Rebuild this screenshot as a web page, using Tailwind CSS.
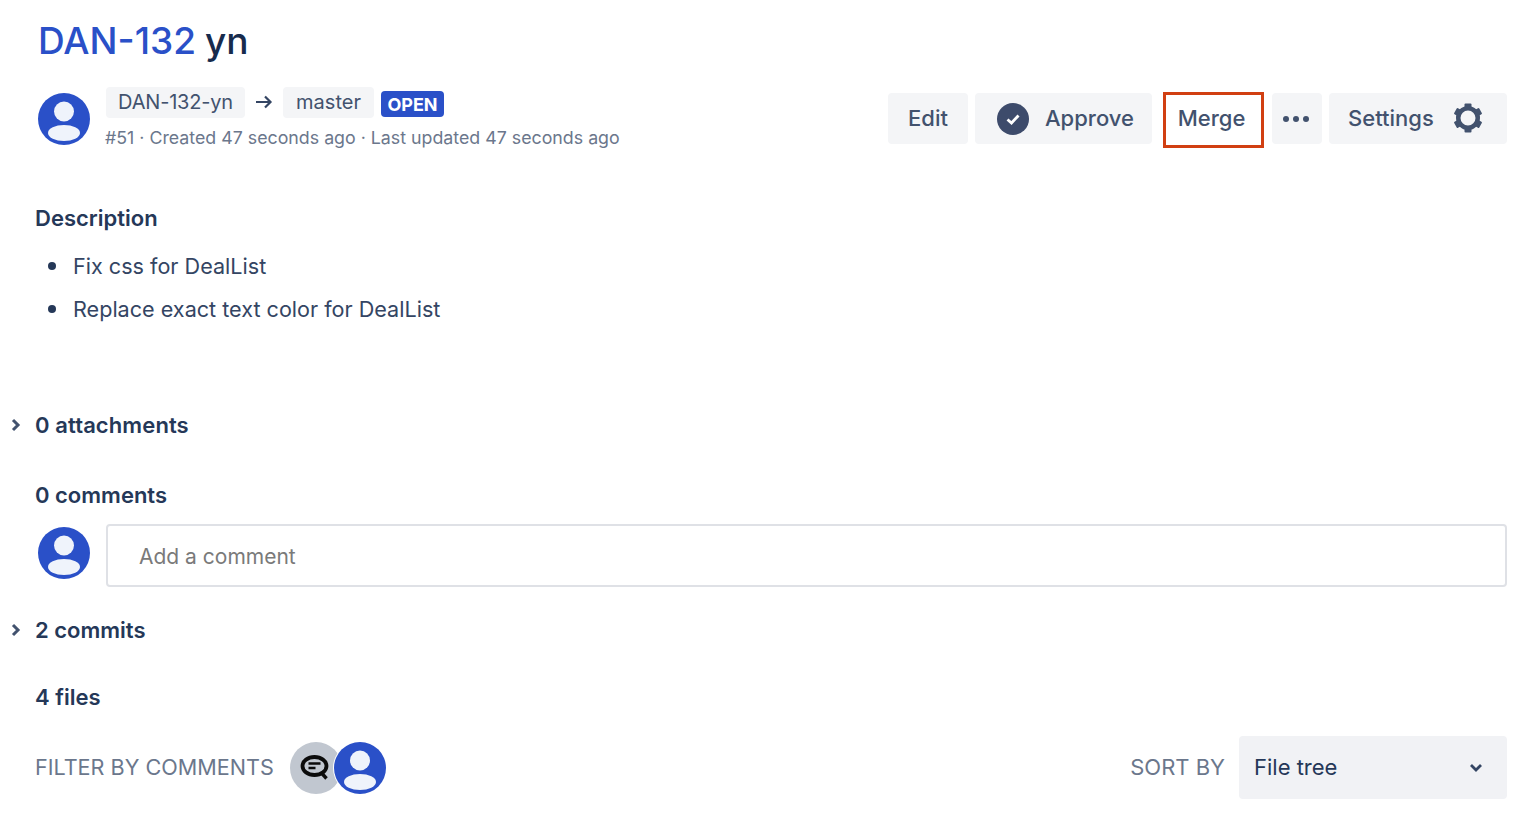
<!DOCTYPE html>
<html lang="en">
<head>
    <meta charset="UTF-8">
    <title>DAN-132 yn</title>
    <script src="https://cdn.jsdelivr.net/npm/@tailwindcss/browser@4"></script>
</head>
<body class="bg-white font-['Inter',sans-serif] text-[#253858] overflow-hidden">
    <div class="w-[1532px] h-[823px] pr-[25px] flex flex-col">
        <!-- Title -->
        <h1 class="h-[82px] pl-[38px] flex items-center text-[37px] font-medium">
            <a class="text-[#2a50c8]">DAN-132</a><span class="ml-[9px] text-[#172b4d]">yn</span>
        </h1>

        <!-- PR header -->
        <div class="h-[70px] flex items-start">
            <svg class="w-[52px] h-[52px] ml-[38px] mt-[11px] shrink-0" viewBox="0 0 52 52"><circle cx="26" cy="26" r="26" fill="#2a50c8"/><circle cx="26" cy="18.500" r="10" fill="#eff3fb"/><ellipse cx="26" cy="40" rx="16" ry="8" fill="#eff3fb"/></svg>
            <div class="ml-[16px] mt-[5px]">
                <div class="flex items-center h-[31px] text-[20px]">
                    <span class="h-[31px] w-[139px] pb-[2px] flex items-center justify-center rounded-[4px] bg-[#f4f5f7] text-[#42526e] tracking-[-0.2px]">DAN-132-yn</span>
                    <svg class="w-[20px] h-[20px] mx-[9px] -mt-[2px]" viewBox="0 0 20 20" fill="none" stroke="#344563" stroke-width="2.200"><path d="M2 10h15M11 4.500l5.500 5.500-5.500 5.500"/></svg>
                    <span class="h-[31px] w-[91px] pb-[2px] flex items-center justify-center rounded-[4px] bg-[#f4f5f7] text-[#42526e]">master</span>
                    <span class="ml-[7px] mt-[3px] h-[26px] w-[63px] flex items-center justify-center rounded-[4px] bg-[#2a50c8] text-white text-[18px] font-bold">OPEN</span>
                </div>
                <p class="mt-[9px] -ml-[1px] text-[17.800px] leading-[22px] text-[#6b778c]">#51 · Created 47 seconds ago · Last updated 47 seconds ago</p>
            </div>
            <div class="ml-auto mt-[11px] flex items-start text-[22px] font-medium text-[#42526e]">
                <button class="h-[51px] w-[80px] rounded-[4px] bg-[#f4f5f7]">Edit</button>
                <button class="ml-[7px] h-[51px] w-[177px] rounded-[4px] bg-[#f4f5f7] flex items-center pl-[22px]">
                    <svg class="w-[32px] h-[32px] mr-[16px]" viewBox="0 0 32 32"><circle cx="16" cy="16" r="16" fill="#3d4b6b"/><path d="M10.500 16.500l4 3.500 7-7.500" fill="none" stroke="#fff" stroke-width="2.800"/></svg>
                    Approve
                </button>
                <button class="ml-[11px] -mt-[1px] h-[56px] w-[101px] pb-[4px] pr-[4px] border-[3px] border-[#d13f12]">Merge</button>
                <button class="ml-[8px] h-[51px] w-[50px] pr-[2px] rounded-[4px] bg-[#f4f5f7] flex items-center justify-center gap-[4px]">
                    <span class="w-[6px] h-[6px] rounded-full bg-[#42526e]"></span><span class="w-[6px] h-[6px] rounded-full bg-[#42526e]"></span><span class="w-[6px] h-[6px] rounded-full bg-[#42526e]"></span>
                </button>
                <button class="ml-[7px] h-[51px] w-[178px] rounded-[4px] bg-[#f4f5f7] flex items-center pl-[19px]">
                    <span class="w-[105px] text-left">Settings</span>
                    <svg class="w-[30px] h-[30px] -mt-[2px]" viewBox="0 0 30 30" fill="#42526e">
                        <circle cx="15" cy="15" r="9.750" fill="none" stroke="#42526e" stroke-width="4.500"/>
                        <rect x="11.500" y="0.500" width="7" height="6" rx="1"/>
                        <rect x="11.500" y="0.500" width="7" height="6" rx="1" transform="rotate(60 15 15)"/>
                        <rect x="11.500" y="0.500" width="7" height="6" rx="1" transform="rotate(120 15 15)"/>
                        <rect x="11.500" y="0.500" width="7" height="6" rx="1" transform="rotate(180 15 15)"/>
                        <rect x="11.500" y="0.500" width="7" height="6" rx="1" transform="rotate(240 15 15)"/>
                        <rect x="11.500" y="0.500" width="7" height="6" rx="1" transform="rotate(300 15 15)"/>
                    </svg>
                </button>
            </div>
        </div>

        <!-- Description -->
        <h2 class="mt-[50px] pl-[35px] h-[32px] flex items-center text-[22px] font-semibold text-[#253858]">Description</h2>
        <ul class="mt-[16px] pl-[48px] text-[21.600px] leading-[32px] text-[#344563]">
            <li class="flex items-center"><span class="w-[8px] h-[8px] rounded-full bg-[#253858] mr-[17px]"></span>Fix css for DealList</li>
            <li class="flex items-center mt-[11px]"><span class="w-[8px] h-[8px] rounded-full bg-[#253858] mr-[17px]"></span>Replace exact text color for DealList</li>
        </ul>

        <!-- Sections -->
        <div class="mt-[84px] h-[32px] flex items-center text-[22px] font-semibold tracking-[0.1px]">
            <svg class="w-[12px] h-[14px] ml-[10px] mr-[13px]" viewBox="0 0 12 14" fill="none" stroke="#42526e" stroke-width="3"><path d="M3 2l5 5-5 5"/></svg>
            0 attachments
        </div>
        <h2 class="mt-[38px] pl-[35px] h-[32px] flex items-center text-[22px] font-semibold">0 comments</h2>
        <div class="flex items-start mt-[13px]">
            <svg class="w-[52px] h-[52px] ml-[38px] mt-[3px] shrink-0" viewBox="0 0 52 52"><circle cx="26" cy="26" r="26" fill="#2a50c8"/><circle cx="26" cy="18.500" r="10" fill="#eff3fb"/><ellipse cx="26" cy="40" rx="16" ry="8" fill="#eff3fb"/></svg>
            <div class="ml-[16px] flex-1 h-[63px] pl-[31px] pt-[2px] flex items-center rounded-[4px] border-2 border-[#dfe1e6] text-[21px] text-[#7a7a7a]">Add a comment</div>
        </div>
        <div class="mt-[27px] h-[32px] flex items-center text-[22px] font-semibold">
            <svg class="w-[12px] h-[14px] ml-[10px] mr-[13px]" viewBox="0 0 12 14" fill="none" stroke="#42526e" stroke-width="3"><path d="M3 2l5 5-5 5"/></svg>
            2 commits
        </div>
        <h2 class="mt-[35px] pl-[35px] h-[32px] flex items-center text-[22px] font-semibold">4 files</h2>

        <!-- Filter row -->
        <div class="mt-[23px] flex items-center h-[63px]">
            <span class="ml-[35px] text-[21.600px] text-[#6b778c]">FILTER BY COMMENTS</span>
            <div class="ml-[16px] flex items-center">
                <span class="w-[52px] h-[52px] rounded-full bg-[#c1c7d0] flex items-center justify-center pr-[2px]">
                    <svg class="w-[30px] h-[30px]" viewBox="0 0 30 30" fill="none" stroke="#0b0b0b"><ellipse cx="14.500" cy="13" rx="12" ry="9" stroke-width="3.800"/><path d="M22 20.500l4.500 5" stroke-width="3.400"/><path d="M8.500 10.500h12M8.500 15h7" stroke-width="2.600"/></svg>
                </span>
                <svg class="w-[54px] h-[54px] -ml-[9px] relative" viewBox="0 0 54 54"><circle cx="27" cy="27" r="27" fill="#fff"/><circle cx="27" cy="27" r="26" fill="#2a50c8"/><circle cx="27" cy="19.500" r="10" fill="#eff3fb"/><ellipse cx="27" cy="41" rx="16" ry="8" fill="#eff3fb"/></svg>
            </div>
            <span class="ml-auto text-[22px] text-[#6b778c]">SORT BY</span>
            <div class="ml-[14px] w-[268px] h-[63px] rounded-[4px] bg-[#f1f2f5] flex items-center justify-between pl-[15px] pr-[24px] text-[22px] text-[#253858]">
                File tree
                <svg class="w-[14px] h-[10px]" viewBox="0 0 14 10" fill="none" stroke="#344563" stroke-width="2.800"><path d="M2 2l5 5 5-5"/></svg>
            </div>
        </div>
    </div>
</body>
</html>
